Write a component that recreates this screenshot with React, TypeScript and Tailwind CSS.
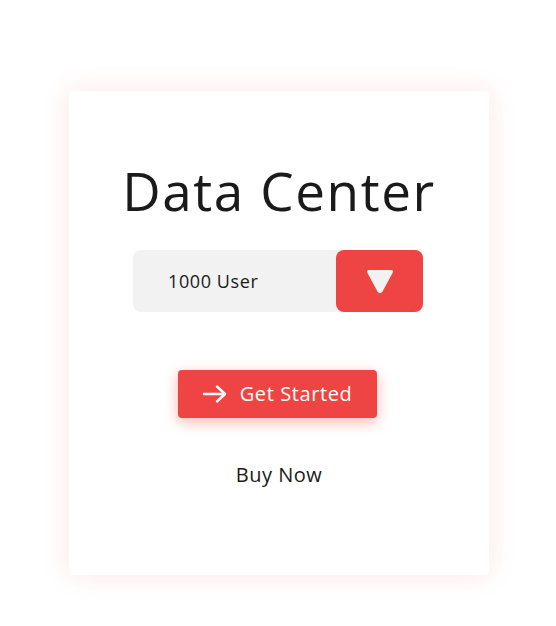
import React from 'react';

function DownTriangle() {
  return (
    <svg width="30" height="28" viewBox="0 0 30 28" fill="none">
      <path
        d="M4 3 H26 Q29 3 27.5 6 L17.5 24.5 Q15 28 12.5 24.5 L2.5 6 Q1 3 4 3 Z"
        fill="#f2f2f2"
      />
    </svg>
  );
}

function ArrowRight() {
  return (
    <svg width="26" height="20" viewBox="0 0 26 20" fill="none" stroke="white" strokeWidth={2.4} strokeLinecap="round" strokeLinejoin="round">
      <path d="M2 10 H23" />
      <path d="M15 2.5 L23 10 L15 17.5" />
    </svg>
  );
}

export default function App() {
  return (
    <div className="min-h-[626px] w-full bg-white pl-[2px] pt-[91px] font-['Open_Sans',sans-serif]">
      <div className="mx-auto flex h-[484px] w-[420px] flex-col items-center rounded-[4px] bg-white shadow-[0_0_28px_rgba(239,68,68,0.14)]">
        {/* Heading */}
        <h1 className="mt-[70px] text-[53px] leading-[60px] tracking-[1.6px] text-[#1a1a1a]">Data Center</h1>

        {/* Plan selector */}
        <div className="mr-[2px] mt-[29px] flex h-[62px] w-[290px] items-center rounded-[8px] bg-[#f2f2f2]">
          <span className="flex-1 pl-[35px] text-[18px] tracking-[0.6px] text-[#1a1a1a]">1000 User</span>
          <button className="flex h-[62px] w-[87px] items-center justify-center rounded-[8px] bg-[#ef4444]">
            <DownTriangle />
          </button>
        </div>

        {/* Call to action */}
        <button className="mr-[4px] mt-[58px] flex h-[48px] w-[199px] items-center justify-center gap-[12px] rounded-[4px] bg-[#ef4444] text-[20px] tracking-[0.6px] text-white shadow-[0_4px_14px_rgba(239,68,68,0.4)]">
          <ArrowRight />
          <span>Get Started</span>
        </button>

        <a className="mt-[42px] text-[20px] tracking-[0.5px] text-[#1a1a1a]">Buy Now</a>
      </div>
    </div>
  );
}
